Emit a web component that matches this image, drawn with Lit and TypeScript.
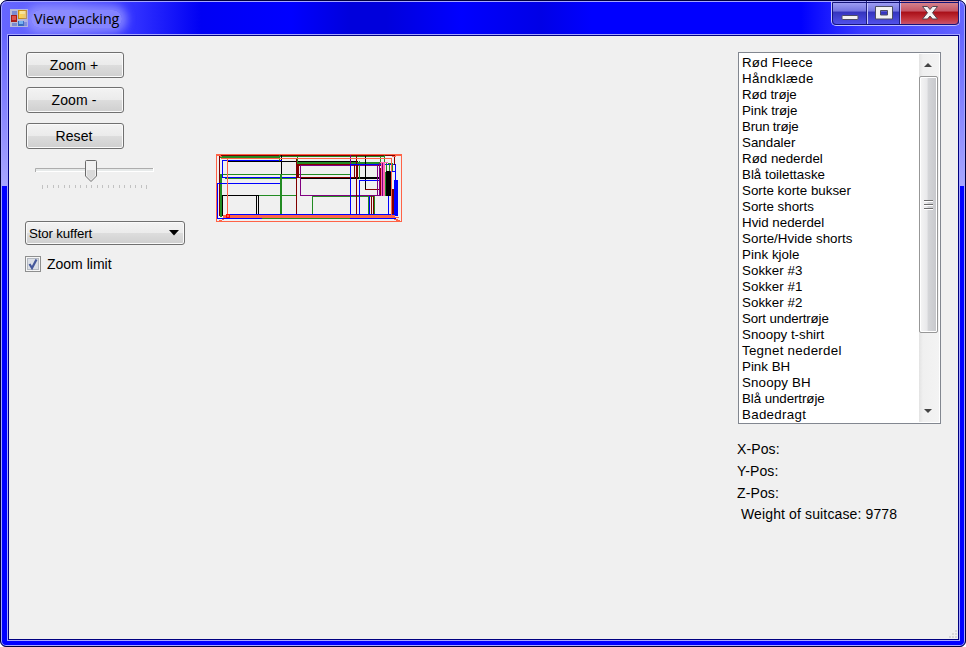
import { LitElement, html, css, svg } from "lit";
import { customElement } from "lit/decorators.js";
import { styleMap } from "lit/directives/style-map.js";

// Item name and its letter spacing in pixels.
const ITEMS: [string, number][] = [
  ["Rød Fleece", 0.2], ["Håndklæde", 0.4], ["Rød trøje", -0.1], ["Pink trøje", -0.1], ["Brun trøje", -0.2],
  ["Sandaler", 0], ["Rød nederdel", 0], ["Blå toilettaske", 0], ["Sorte korte bukser", 0],
  ["Sorte shorts", 0], ["Hvid nederdel", 0], ["Sorte/Hvide shorts", 0.05], ["Pink kjole", 0.05],
  ["Sokker #3", 0.05], ["Sokker #1", 0.05], ["Sokker #2", 0.05], ["Sort undertrøje", -0.15], ["Snoopy t-shirt", 0],
  ["Tegnet nederdel", 0.27], ["Pink BH", 0], ["Snoopy BH", 0.15], ["Blå undertrøje", -0.08], ["Badedragt", 0.3],
];

const R = "#800000", G = "#228b22", B = "#0000ff", K = "#000", P = "#800080", T = "#ff6347", H = "#ff69b4";

// Filled spans of the packing wireframe: colour, x, y, width, height.
const SPANS: [string, number, number, number, number][] = [
  [R, 218, 155, 177, 1], [G, 220, 156, 165, 1], [G, 220, 157, 60, 1], [K, 281, 155, 1, 21],
  [R, 219, 155, 1, 61], [G, 220, 174, 2, 43], [G, 220, 174, 131, 1], [G, 225, 178, 72, 1],
  [B, 222, 160, 60, 1], [B, 222, 160, 1, 18], [B, 222, 177, 75, 1],
  [B, 217, 183, 65, 1], [B, 217, 183, 1, 36], [B, 218, 218, 44, 1], [G, 262, 218, 88, 1], [B, 350, 218, 46, 1],
  [G, 279, 155, 1, 6], [G, 280, 174, 2, 43], [G, 258, 195, 39, 1],
  [K, 228, 161, 130, 1], [K, 222, 195, 37, 1], [K, 222, 195, 1, 21], [K, 256, 196, 1, 20], [K, 258, 195, 1, 21],
  [G, 297, 156, 1, 8], [G, 297, 162, 84, 2], [R, 296, 164, 88, 2],
  [R, 296, 158, 1, 58], [R, 297, 164, 2, 14], [K, 300, 177, 80, 2], [R, 298, 177, 56, 1],
  [P, 300, 165, 78, 1], [P, 300, 165, 1, 31], [P, 300, 195, 81, 1],
  [G, 312, 196, 63, 1], [G, 312, 196, 1, 20], [G, 368, 196, 1, 20], [G, 374, 196, 1, 20],
  [R, 371, 196, 1, 20], [R, 373, 196, 1, 20], [B, 369, 196, 1, 20],
  [P, 350, 155, 1, 10], [B, 350, 165, 1, 51], [R, 354, 165, 1, 13], [R, 356, 155, 1, 61], [R, 357, 165, 1, 13],
  [G, 359, 161, 1, 18], [B, 359, 180, 1, 36], [K, 365, 156, 1, 34], [R, 365, 189, 26, 1],
  [B, 359, 180, 30, 1], [B, 350, 164, 46, 1], [P, 377, 165, 1, 31], [P, 379, 163, 1, 33],
  [H, 381, 163, 1, 33], [H, 383, 163, 2, 33], [R, 380, 168, 1, 27], [P, 382, 163, 1, 33], [H, 380, 162, 8, 1],
  [G, 380, 157, 1, 5], [G, 384, 155, 1, 7], [G, 386, 163, 1, 10], [G, 388, 163, 5, 1], [G, 389, 163, 1, 9], [G, 392, 163, 1, 9],
  [K, 386, 171, 5, 25], [G, 385, 172, 1, 24], [B, 388, 196, 1, 20],
  [B, 395, 164, 1, 52], [B, 396, 180, 2, 36], [B, 394, 180, 1, 36], [B, 390, 171, 6, 1],
  [R, 391, 189, 3, 27], [R, 394, 155, 1, 10],
  [B, 230, 214, 166, 1], [T, 227, 158, 1, 58], [T, 221, 158, 171, 1], [T, 391, 158, 1, 58],
  [T, 223, 215, 172, 3],
  [T, 217, 155, 4, 1], [T, 220, 156, 2, 1], [T, 395, 155, 6, 1], [T, 392, 156, 4, 1],
  [T, 219, 220, 3, 1], [T, 222, 219, 2, 1], [T, 394, 219, 4, 1], [T, 396, 220, 4, 1], [T, 394, 217, 5, 1],
];

@customElement("app-root")
export class AppRoot extends LitElement {
  static styles = css`
    :host { display: block; width: 966px; height: 647px; font-family: "Liberation Sans", Arial, sans-serif; color: #000; }
    * { box-sizing: border-box; }
    .window {
      height: 647px; display: flex; flex-direction: column; padding: 0 6px 5px 7px; overflow: hidden;
      border: 1px solid #000040; border-radius: 7px 7px 6px 6px;
      box-shadow: inset 0 0 0 1px #a6a6ff;
      background:
        linear-gradient(#6666ff, #a8a6ff 100%) 1px 34px / 7px 151px no-repeat,
        linear-gradient(#6666ff, #a8a6ff 100%) 957px 34px / 7px 151px no-repeat,
        linear-gradient(90deg, #6666ff 0, #5a5aff 70px, #3030ff 135px, #0000f4 200px, #0000ff 290px, #0000dc 350px, #0000dc 385px, #0000ff 460px, #0000e6 540px, #0000ff 590px, #0000ff 800px, #3a3aff 860px, #6666ff 966px) 0 0 / 100% 34px no-repeat,
        #0000ff;
    }
    .title { height: 33px; display: flex; align-items: flex-start; padding-left: 2px; flex: none; }
    .logo { width: 18px; height: 18px; margin-top: 8px; }
    .name {
      font: 14.3px/18px "Open Sans", "Noto Sans", sans-serif; letter-spacing: -.07px; margin: 9px auto 0 3px; padding: 0 3px; white-space: nowrap;
      background: rgba(160,160,255,.7); border-radius: 9px; box-shadow: 0 0 9px 5px rgba(160,160,255,.7);
    }
    .controls { display: flex; height: 25px; border: 1px solid #c0c0ff; border-top: 0; border-radius: 0 0 5px 5px; margin-right: -1px; overflow: hidden; outline: 1px solid #14147a; outline-offset: -2px; }
    .ctl { display: flex; justify-content: center; align-items: flex-start; background: linear-gradient(#a6a6f8, #7474e0 42%, #3434bd 46%, #5454ed); border-right: 1px solid #c4c4ff; box-shadow: inset -1px 0 #20207e; width: 36px; }
    .ctl.max { width: 33px; }
    .ctl.close { width: 58px; border: 0; background: linear-gradient(#d98c96, #c65664 42%, #a90f18 46%, #c4343c 75%, #c65a7c); }
    .client { flex: 1; display: flex; background: #f0f0f0; border: 1px solid #000080; outline: 1px solid #a6a6ff; position: relative; margin: 1px 0 1px; }
    .left { width: 190px; padding: 16px 0 0 17px; display: flex; flex-direction: column; align-items: flex-start; }
    .btn { width: 98px; height: 26px; border: 1px solid #707070; border-radius: 3px; box-shadow: inset 0 0 0 1px #fafafa; background: linear-gradient(#f3f3f3, #ebebeb 49%, #dddddd 50%, #cfcfcf); font-size: 14px; line-height: 24px; text-align: center; letter-spacing: .1px; padding-right: 2px; }
    .btn + .btn { margin-top: 9px; }
    .btn + .btn.last { margin-top: 10px; }
    .slider { margin: 11px 0 0 9px; width: 120px; height: 32px; display: block; }
    .combo { margin-top: 29px; margin-left: -1px; width: 160px; height: 24px; border: 1px solid #707070; border-radius: 3px; box-shadow: inset 0 0 0 1px #fafafa; background: linear-gradient(#f3f3f3, #ebebeb 49%, #dddddd 50%, #cfcfcf); display: flex; justify-content: space-between; align-items: center; padding: 0 5px 0 3px; font-size: 13.3px; letter-spacing: -.15px; }
    .check { display: flex; align-items: center; gap: 6px; margin: 10px 0 0 -1px; font-size: 14px; height: 18px; }
    .check svg, .combo svg, .packing, .logo { display: block; }
    .stage { flex: 1; padding: 112px 0 0 11px; }
    .right { width: 221px; padding-top: 16px; }
    .list { width: 203px; height: 372px; margin-left: 1px; border: 1px solid #828790; background: #fff; display: flex; justify-content: space-between; }
    .items { padding: 2px 0 0 3px; font-size: 13.33px; line-height: 16px; white-space: nowrap; }
    .item { height: 16px; }
    .scroll { width: 20px; margin: 1px 1px 1px 0; padding-right: 1px; background: linear-gradient(90deg, #e3e3e3, #f0f0f0 20%, #f3f3f3); display: flex; flex-direction: column; align-items: center; }
    .arrow { height: 22px; flex: none; display: flex; align-items: center; padding-right: 1px; }
    .thumb { width: 19px; height: 257px; flex: none; border: 1px solid #979797; border-radius: 2px; box-shadow: inset 0 0 0 1px #fff; background: linear-gradient(90deg, #f5f5f5, #e9e9eb 40%, #d4d5d8 50%, #c6c7cb); display: flex; align-items: center; justify-content: center; }
    .space { flex: 1; }
    .pos { font-size: 14px; height: 22px; line-height: 22px; letter-spacing: .12px; }
    .pos.first { margin-top: 14px; }
    .weight { font-size: 14px; line-height: 22px; letter-spacing: .13px; margin: -1px 0 0 4px; white-space: nowrap; }
    .grip { position: absolute; right: 0; bottom: 0; display: block; }
  `;

  render() {
    return html`
      <div class="window">
        <div class="title">
          <svg class="logo" viewBox="0 0 18 18" shape-rendering="crispEdges">
            <rect width="18" height="18" fill="#b9bbd6"/>
            <path d="M2 2h5v4H2zM2 14h5v3H2zM14 13h3v4h-3z" fill="#7b8bd0"/>
            <rect x="8" y="1" width="9" height="9" fill="#c88a12"/><rect x="9" y="2" width="7" height="7" fill="#ffd34d"/><rect x="10" y="2" width="5" height="3" fill="#ffe993"/>
            <rect x="1" y="6" width="6" height="7" fill="#a91d18"/><rect x="2" y="7" width="4" height="4" fill="#dc5148"/>
            <rect x="8" y="12" width="6" height="5" fill="#3368bd"/><rect x="9" y="12" width="4" height="3" fill="#75b3f1"/>
          </svg>
          <div class="name">View packing</div>
          <div class="controls">
            <div class="ctl"><svg width="18" height="22" viewBox="0 0 18 22"><rect x="1" y="14.500" width="16" height="4" rx="1" fill="#f2f2f2" stroke="#4b4c63"/></svg></div>
            <div class="ctl max"><svg width="18" height="22" viewBox="0 0 18 22"><path d="M.5 5.500h17v12.500H.5zM5.500 9.500v4.500h7v-4.500z" fill="#f2f2f2" fill-rule="evenodd" stroke="#4b4c63"/></svg></div>
            <div class="ctl close"><svg width="18" height="22" viewBox="0 0 18 22"><path d="M1.500 5.500h5l2.500 3 2.500-3h5l-5 6.250 5 6.250h-5l-2.500-3-2.500 3h-5l5-6.250z" fill="#f5f5f5" stroke="#554450"/></svg></div>
          </div>
        </div>
        <div class="client">
          <div class="left">
            <div class="btn">Zoom +</div>
            <div class="btn">Zoom -</div>
            <div class="btn last">Reset</div>
            <svg class="slider" viewBox="0 0 120 32">
              <rect x="0" y="8" width="119" height="4" fill="#fff"/><rect x="0" y="8" width="118" height="3" fill="#e7eaea"/>
              <path d="M.5 12V8.500H118" fill="none" stroke="#adadad"/>
              ${Array.from({ length: 20 }, (_, i) => svg`<rect x=${Math.round(7 + i * 5.48)} y="25" width="1" height=${i === 0 || i === 19 ? 4 : 3} fill="#c2c2c2"/>`)}
              <path d="M50.500 1.500q0-1 1-1h9q1 0 1 1v14.500l-5.500 5.500-5.500-5.500z" fill="#f1f1f1" stroke="#6a6a6a"/>
              <path d="M52 10h8v6l-4 4-4-4z" fill="#dadada"/>
            </svg>
            <div class="combo"><span>Stor kuffert</span><svg width="10" height="6" viewBox="0 0 10 6"><path d="M0 0h10L5 5.500z"/></svg></div>
            <div class="check">
              <svg width="16" height="16" viewBox="0 0 16 16"><rect x=".5" y=".5" width="15" height="15" fill="#f6f6f6" stroke="#8e8f8f"/><rect x="2.500" y="2.500" width="11" height="11" fill="#dbdfe6" stroke="#b4b9c2"/><path d="M4.500 8l2.500 4 4.500-8.500" fill="none" stroke="#45589b" stroke-width="2.200"/></svg>
              <span>Zoom limit</span>
            </div>
          </div>
          <div class="stage">
            <svg class="packing" width="200" height="80" viewBox="210 148 200 80" shape-rendering="crispEdges">
              ${SPANS.map(([c, x, y, w, h]) => svg`<rect x=${x} y=${y} width=${w} height=${h} fill=${c}/>`)}
              <path d="M216.500 154.500h185v67h-185z" fill="none" stroke="${T}"/>
              <rect x="226.500" y="214.500" width="3" height="3" fill="none" stroke="#f00"/>
            </svg>
          </div>
          <div class="right">
            <div class="list">
              <div class="items">${ITEMS.map(([name, gap]) => html`<div class="item" style=${styleMap({ letterSpacing: `${gap}px` })}>${name}</div>`)}</div>
              <div class="scroll">
                <div class="arrow"><svg width="8" height="4" viewBox="0 0 8 4"><path d="M0 4L4 0l4 4z" fill="#444"/></svg></div>
                <div class="thumb"><svg width="9" height="10" viewBox="0 0 9 10" shape-rendering="crispEdges"><path d="M0 .5h9M0 4.500h9M0 8.500h9" stroke="#6c6c6c"/><path d="M0 1.500h9M0 5.500h9M0 9.500h9" stroke="#fff"/></svg></div>
                <div class="space"></div>
                <div class="arrow"><svg width="8" height="4" viewBox="0 0 8 4"><path d="M0 0h8L4 4z" fill="#444"/></svg></div>
              </div>
            </div>
            <div class="pos first">X-Pos:</div>
            <div class="pos">Y-Pos:</div>
            <div class="pos">Z-Pos:</div>
            <div class="weight">Weight of suitcase: 9778</div>
          </div>
          <svg class="grip" width="9" height="9" viewBox="0 0 9 9"><path d="M6 0h2v2H6zM3 3h2v2H3zM6 3h2v2H6zM0 6h2v2H0zM3 6h2v2H3zM6 6h2v2H6z" fill="#d8d8d8"/></svg>
        </div>
      </div>`;
  }
}
